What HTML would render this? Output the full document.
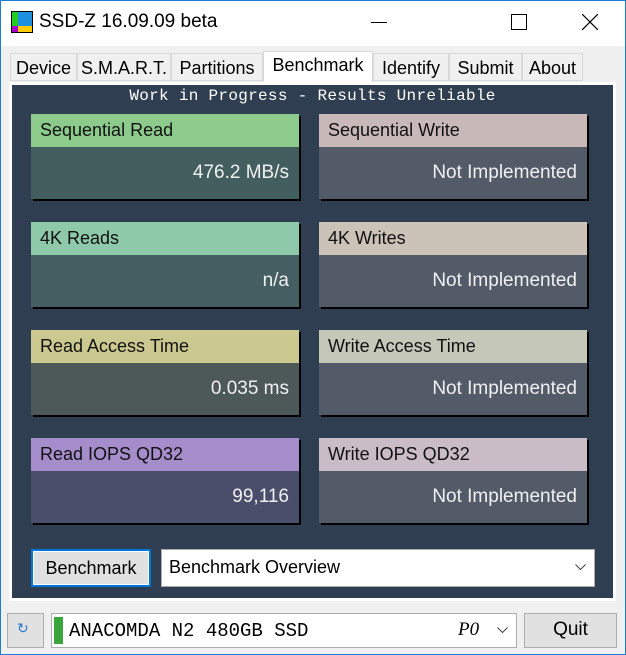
<!DOCTYPE html>
<html><head><style>
*{box-sizing:border-box;margin:0;padding:0}
body{width:626px;height:655px;background:#f0f0f0;font-family:"Liberation Sans",sans-serif;position:relative;overflow:hidden}
.frame{position:absolute;left:0;top:0;width:626px;height:655px;border:1px solid #1a7fd4;pointer-events:none}
.a{position:absolute}
.title{left:0;top:0;width:626px;height:46px;background:#fff}
.tab{top:53px;height:28px;background:#f0f0f0;border:1px solid #d9d9d9;font-size:18px;color:#000;text-align:center;padding-top:4px;white-space:nowrap;overflow:hidden}
.panel{left:9px;top:82px;width:607px;height:519px;background:#fff}
.dark{left:12px;top:85px;width:601px;height:513px;background:#2f3e50}
.card{width:268px;height:85px;box-shadow:2px 2px 0 #000}
.h{height:33px;font-size:18px;color:#111;padding:6px 0 0 9px}
.v{height:52px;font-size:19px;color:#f0f0f0;text-align:right;padding:15px 10px 0 0}
</style></head><body>
<div class="a title"></div>
<div class="a" style="left:11px;top:11px;width:22px;height:22px;background:#000"></div>
<div class="a" style="left:12px;top:12px;width:6px;height:14px;background:#2c2"></div>
<div class="a" style="left:18px;top:12px;width:14px;height:14px;background:#1e90e0"></div>
<div class="a" style="left:12px;top:26px;width:6px;height:6px;background:#a0c"></div>
<div class="a" style="left:18px;top:26px;width:14px;height:6px;background:#fc0"></div>
<div class="a" style="left:39px;top:11px;font-size:19px">SSD-Z 16.09.09 beta</div>
<div class="a" style="left:371px;top:22px;width:16px;height:1px;background:#000"></div>
<div class="a" style="left:511px;top:14px;width:16px;height:16px;border:1px solid #000"></div>
<svg class="a" style="left:582px;top:14px" width="16" height="16"><path d="M0 0L16 16M16 0L0 16" stroke="#000" stroke-width="1.2"/></svg>
<div class="a tab" style="left:10px;width:67px">Device</div>
<div class="a tab" style="left:77px;width:94px">S.M.A.R.T.</div>
<div class="a tab" style="left:171px;width:92px">Partitions</div>
<div class="a tab" style="left:263px;top:51px;height:32px;width:110px;background:#fff;border-bottom:none;padding-top:3px">Benchmark</div>
<div class="a tab" style="left:373px;width:76px">Identify</div>
<div class="a tab" style="left:449px;width:73px">Submit</div>
<div class="a tab" style="left:522px;width:61px">About</div>
<div class="a panel"></div>
<div class="a dark"></div>
<div class="a" style="left:12px;top:87px;width:601px;text-align:center;color:#fff;font-family:'Liberation Mono',monospace;font-size:16px;letter-spacing:0.3px">Work in Progress - Results Unreliable</div>

<div class="a card" style="left:31px;top:114px"><div class="h" style="background:#8dcb8d">Sequential Read</div><div class="v" style="background:#435e5e">476.2 MB/s</div></div>
<div class="a card" style="left:319px;top:114px"><div class="h" style="background:#c9b8b8">Sequential Write</div><div class="v" style="background:#535a68">Not Implemented</div></div>
<div class="a card" style="left:31px;top:222px"><div class="h" style="background:#8ecaa9">4K Reads</div><div class="v" style="background:#455e62">n/a</div></div>
<div class="a card" style="left:319px;top:222px"><div class="h" style="background:#cbc2b8">4K Writes</div><div class="v" style="background:#535a68">Not Implemented</div></div>
<div class="a card" style="left:31px;top:330px"><div class="h" style="background:#cbc98f">Read Access Time</div><div class="v" style="background:#4d5858">0.035 ms</div></div>
<div class="a card" style="left:319px;top:330px"><div class="h" style="background:#c5c7b8">Write Access Time</div><div class="v" style="background:#535a68">Not Implemented</div></div>
<div class="a card" style="left:31px;top:438px"><div class="h" style="background:#a58dcb">Read IOPS QD32</div><div class="v" style="background:#4a4e6a">99,116</div></div>
<div class="a card" style="left:319px;top:438px"><div class="h" style="background:#c9bcc7">Write IOPS QD32</div><div class="v" style="background:#535a68">Not Implemented</div></div>

<div class="a" style="left:31px;top:549px;width:120px;height:38px;background:#e1e1e1;border:2px solid #0078d7;font-size:18px;text-align:center;padding-top:7px;box-shadow:inset 0 0 0 1px #fff">Benchmark</div>
<div class="a" style="left:161px;top:549px;width:434px;height:38px;background:#fff;border:1px solid #aaa;font-size:18px;padding:7px 0 0 7px">Benchmark Overview</div>
<svg class="a" style="left:575px;top:564px" width="11" height="7"><path d="M0.5 0.5L5.5 5.5L10.5 0.5" stroke="#444" fill="none"/></svg>

<div class="a" style="left:7px;top:613px;width:37px;height:35px;background:#e1e1e1;border:1px solid #adadad"></div>
<div class="a" style="left:17px;top:620px;font-size:14px;color:#2a7ad0">&#8635;</div>
<div class="a" style="left:51px;top:613px;width:466px;height:35px;background:#fff;border:1px solid #adadad"></div>
<div class="a" style="left:54px;top:617px;width:9px;height:27px;background:#3aa53a"></div>
<div class="a" style="left:69px;top:620px;font-family:'Liberation Mono',monospace;font-size:19px">ANACOMDA N2 480GB SSD</div>
<div class="a" style="left:458px;top:619px;font-family:'Liberation Serif',serif;font-style:italic;font-size:19px">P0</div>
<svg class="a" style="left:497px;top:627px" width="11" height="7"><path d="M0.5 0.5L5.5 5.5L10.5 0.5" stroke="#444" fill="none"/></svg>
<div class="a" style="left:524px;top:613px;width:93px;height:35px;background:#e1e1e1;border:1px solid #adadad;font-size:19px;text-align:center;padding-top:5px">Quit</div>
<div class="frame"></div>
</body></html>
